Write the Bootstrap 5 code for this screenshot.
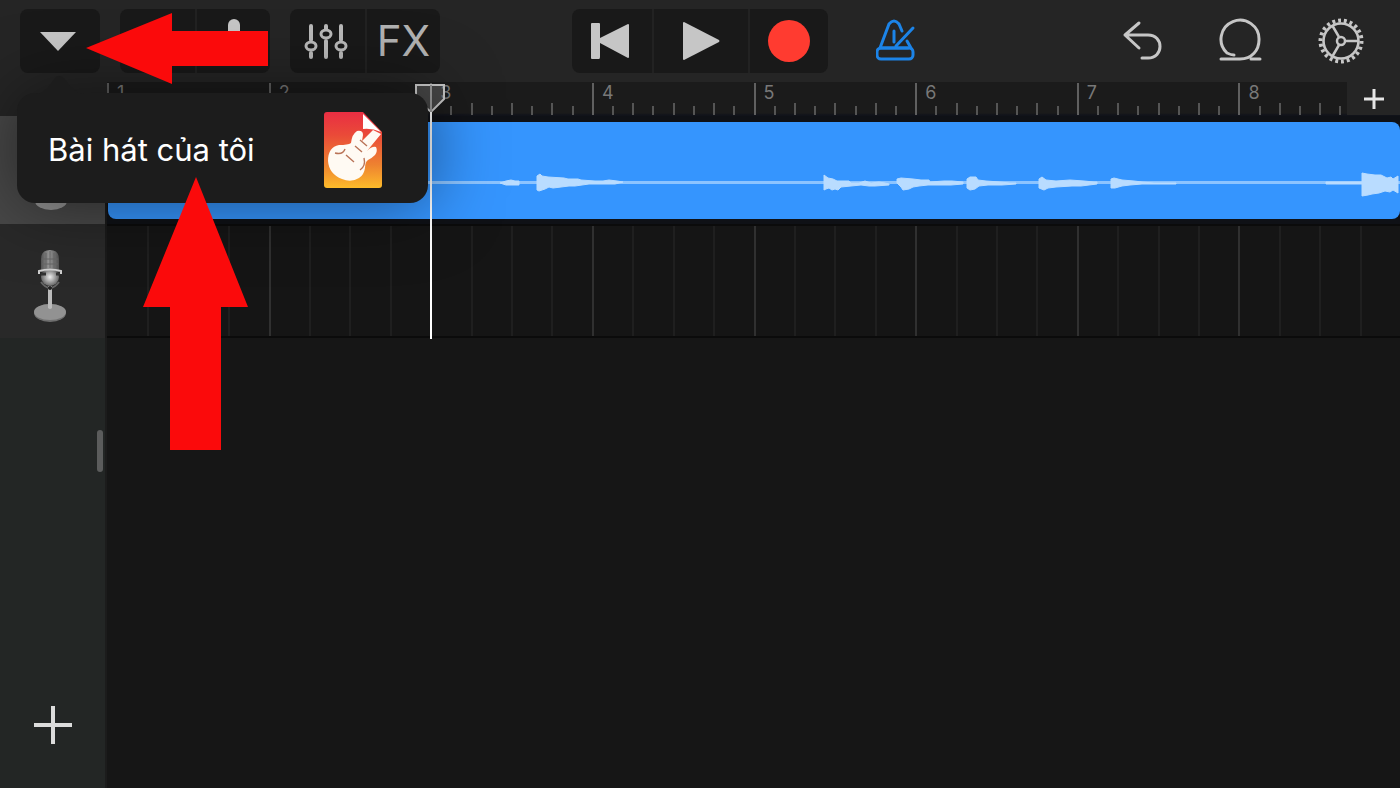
<!DOCTYPE html>
<html lang="vi">
<head>
<meta charset="utf-8">
<meta name="viewport" content="width=device-width, initial-scale=1">
<title>GarageBand</title>
<link href="https://cdn.jsdelivr.net/npm/bootstrap@5.3.0/dist/css/bootstrap.min.css" rel="stylesheet">
<style>
  :root { --side: 107px; --icon: #c6c6c6; }
  body { background: #161616; color: #fff; font-family: Inter, "Liberation Sans", sans-serif; overflow: hidden; }
  svg { display: block; }
  button { border: 0; background: none; padding: 0; color: var(--icon); }

  .toolbar { display: grid; grid-template-columns: 1fr auto 1fr; height: 82px; padding: 9px 20px 9px; background: #252525; }
  .tool-set { height: 64px; background: #191919; border-radius: 8px; }
  .tool-set button { display: flex; align-items: center; justify-content: center; height: 64px; }
  .tool-set button + button { border-left: 2px solid #222; }
  .w-sm { width: 75px; }
  .w-md { width: 80px; }
  .w-lg { width: 96px; }
  .fx { font-size: 42px; font-weight: 400; line-height: 64px; color: #b2b2b2; }
  .right-tools { gap: 56px; }

  .side { width: var(--side); flex: none; border-right: 2px solid #1a1a1a; }
  .ruler { height: 34px; background: #252525; }
  .ruler .side { border-color: #252525; }
  .measures { display: grid; grid-template-columns: repeat(8, 1fr); background: linear-gradient(#1b1b1b 31px, #11131a 33px); }
  .measure { display: grid; grid-template-columns: repeat(8, 1fr); align-items: end; position: relative; padding-bottom: 1px; }
  .measure i { border-left: 2px solid #555; height: 9px; }
  .measure i:nth-of-type(odd) { height: 12px; }
  .measure i:first-of-type { height: 32px; border-color: #606060; }
  .measure span { position: absolute; left: 10px; top: 0; font-size: 18px; line-height: 22px; color: #787878; }
  .add-section { position: absolute; right: 0; top: 0; width: 53px; height: 33px; background: #252525; display: flex; align-items: center; justify-content: center; }

  .track-one { height: 108px; background: #0f1116; }
  .track-one .side { background: #484848; }
  .track-two { height: 114px; background: #0b0b0b; }
  .track-two .side { background: #292929; }
  .clip { margin: 6px 0 5px 1px; background: #3595fe; border-radius: 8px; overflow: hidden; }
  .lane-grid { display: grid; grid-template-columns: repeat(32, 1fr); margin: 2px 0; background: #151515; }
  .lane-grid i { border-left: 2px solid #1f1f1f; }
  .lane-grid i:nth-child(4n+1) { border-color: #303030; }
  .lane-grid i:first-child { border: 0; }
  .rest .side { background: #232625; border-color: #1c1c1c; }
  .handle { width: 6px; height: 42px; margin: 92px 2px 0 0; background: #5b5c5c; border-radius: 3px; }
  .new-track { width: 40px; height: 40px; margin: 0 0 43px 33px; }

  .over { position: absolute; }
  .playhead { left: calc(var(--side) + (100% - var(--side)) / 4 - 16px); top: 82px; }
  .songs-menu { left: 17px; top: 93px; width: 411px; height: 110px; padding: 4px 46px 0 31px; background: #1c1c1c; border-radius: 18px; box-shadow: 0 0 70px rgba(0,0,0,.5); }
  .songs-menu a { font-size: 31px; line-height: 40px; }
  .songs-tip { left: 36px; top: 75px; }
  .arrow-left { left: 86px; top: 13px; }
  .arrow-up { left: 143px; top: 177px; }
</style>
</head>
<body class="position-relative vh-100 d-flex flex-column">

<header class="toolbar">
  <div class="d-flex gap-3">
    <div class="tool-set me-1">
      <button class="w-md" aria-label="Menu"><svg class="me-1" width="38" height="22" viewBox="0 0 38 22" fill="currentColor"><path d="M1 2h36L19 21z"/></svg></button>
    </div>
    <div class="tool-set d-flex me-1">
      <button class="w-sm" aria-label="Tracks"><svg width="28" height="16" viewBox="0 0 28 16" stroke="currentColor" stroke-width="3"><path d="M2 2h24M2 8h24M2 14h24"/></svg></button>
      <button class="w-sm" aria-label="Instrument"><svg width="30" height="44" viewBox="0 0 30 44" fill="none" stroke="currentColor" stroke-width="3"><rect x="9" y="0" width="12" height="26" rx="6" fill="currentColor" stroke="none"/><path d="M4 20c0 14 22 14 22 0M15 31v11M8 42h14"/></svg></button>
    </div>
    <div class="tool-set d-flex">
      <button class="w-sm" aria-label="Mixer"><svg class="me-1" width="44" height="38" viewBox="0 0 44 38" fill="none" stroke="#b9b9b9" stroke-width="4" stroke-linecap="round"><path d="M7 4v14M7 31v4M22 4v3M22 19v16M37 4v14M37 31v4"/><ellipse cx="7" cy="24" rx="5" ry="4" stroke-width="3"/><ellipse cx="22" cy="12" rx="5" ry="4" stroke-width="3"/><ellipse cx="37" cy="24" rx="5" ry="4" stroke-width="3"/></svg></button>
      <button class="w-sm fx">FX</button>
    </div>
  </div>
  <div class="tool-set d-flex">
    <button class="w-md" aria-label="Rewind"><svg class="me-1" width="40" height="38" viewBox="0 0 40 38" fill="currentColor"><path d="M1 2q0-1 1-1h7q1 0 1 1v14L38 2q1 0 1 1v32q0 1-1 1L10 21v14q0 2-1 2H2q-1 0-1-1z"/></svg></button>
    <button class="w-lg" aria-label="Play"><svg width="40" height="40" viewBox="0 0 40 40" fill="currentColor"><path d="M2 2q0-1 1-1L38 19q1 1 0 2L3 39q-1 0-1-1z"/></svg></button>
    <button class="w-md" aria-label="Record"><svg width="44" height="44" viewBox="0 0 44 44"><circle cx="22" cy="22" r="21" fill="#ff3b30"/></svg></button>
  </div>
  <div class="right-tools d-flex align-items-center">
    <button class="ms-5 me-auto" aria-label="Metronome"><svg width="42" height="44" viewBox="2 0 42 44" fill="none" stroke="#1c84e8" stroke-width="3" stroke-linecap="round" stroke-linejoin="round"><path d="M6 29 15 5q5-6 10 0l3 7M33 22l4 7M20 12v11M39 9 22 27M6 29h28"/><rect x="3" y="29" width="36" height="11" rx="4"/></svg></button>
    <button aria-label="Undo"><svg width="40" height="42" viewBox="0 0 40 42" fill="none" stroke="currentColor" stroke-width="3" stroke-linecap="round" stroke-linejoin="round"><path d="M17 3 3 15l14 13M3 15h23c16 0 16 23 0 23h-6"/></svg></button>
    <button aria-label="Loops"><svg width="44" height="46" viewBox="0 0 44 46" fill="none" stroke="currentColor" stroke-width="3" stroke-linecap="round"><path d="M3 41h19C34 41 41 32 41 22A19 19 0 1 0 9 35q4 2 7 2M33 41h9"/></svg></button>
    <button class="me-3" aria-label="Settings"><svg width="46" height="48" viewBox="0 0 46 48" fill="none" stroke="currentColor"><circle cx="23" cy="24" r="20.5" stroke-width="4" pathLength="88" stroke-dasharray="2 2"/><circle cx="23" cy="24" r="17.5" stroke-width="2.6"/><circle cx="23" cy="24" r="4" stroke-width="2.5"/><path d="M27 24h14M21 20l-7-12M21 28l-7 12" stroke-width="2.5"/></svg></button>
  </div>
</header>

<div class="ruler d-flex position-relative">
  <div class="side"></div>
  <div class="measures flex-grow-1">
    <div class="measure"><span>1</span><i></i><i></i><i></i><i></i><i></i><i></i><i></i><i></i></div>
    <div class="measure"><span>2</span><i></i><i></i><i></i><i></i><i></i><i></i><i></i><i></i></div>
    <div class="measure"><span>3</span><i></i><i></i><i></i><i></i><i></i><i></i><i></i><i></i></div>
    <div class="measure"><span>4</span><i></i><i></i><i></i><i></i><i></i><i></i><i></i><i></i></div>
    <div class="measure"><span>5</span><i></i><i></i><i></i><i></i><i></i><i></i><i></i><i></i></div>
    <div class="measure"><span>6</span><i></i><i></i><i></i><i></i><i></i><i></i><i></i><i></i></div>
    <div class="measure"><span>7</span><i></i><i></i><i></i><i></i><i></i><i></i><i></i><i></i></div>
    <div class="measure"><span>8</span><i></i><i></i><i></i><i></i><i></i><i></i><i></i><i></i></div>
  </div>
  <button class="add-section" aria-label="Add section"><svg width="20" height="20" viewBox="0 0 20 20" stroke="#e6e6e6" stroke-width="3"><path d="M10 0v20M0 10h20"/></svg></button>
</div>

<div class="track-one d-flex">
  <div class="side d-flex align-items-end justify-content-center pb-2"><svg class="me-1" width="34" height="16" viewBox="0 0 34 16"><ellipse cx="17" cy="1" rx="16" ry="9" fill="#929292"/></svg></div>
  <div class="clip flex-grow-1">
    <svg width="100%" height="97" viewBox="0 0 1292 97" preserveAspectRatio="none" fill="#b9dcff" stroke="#b9dcff">
      <path d="M0 59h1292v3H0z" fill="#8cc4ff" stroke="none"/>
      <path d="M392 61l6-2 5-1 4 1 4 0v4h-6l-7 0z"/>
      <path d="M429 60v-6l3-2 2 2 6 1 16 1 4 1 10 0 3 1 14 1 8 0 6-1 8 1 6 1-8 2-14 0-12 0-14 2-6 0-8 1-8 1-4-1-4 2-6 2-2-1z"/>
      <path d="M716 68v-15l4 3 5 1 4 2 12 0 2 2 8 0 6-2 6 2 8-1 6 1 4 1v1l-14 1-6 0-8-1-10 1-10 1-3 3-3-1-3 1-3-2-3 1z"/>
      <path d="M789 61v-4l4-1 12 1 8 1 8 0 1 2 14-1 8 0 11 1v2l-12 1-14 0-9 0-9 1-6 1-4 2-6 1-2-3z"/>
      <path d="M859 61v-4l3-2 6 0 2 3 8 1 14 1 10 1 6 0v1l-14 1-14 0-9 1-4 3-5 1-3-2z"/>
      <path d="M931 61v-4l3-2 4 3 10 1 14-1 14 1 10 1 3 0v2l-16 2-9 0-16 1-8 1-4 2-5-2z"/>
      <path d="M1003 66v-9l3-1 8 2 12 1 8 1 12 1 22 0v1h-34l-12 1-8 1-7 2z"/>
      <path d="M1218 60h36v-9l5 1 8 1 6 0 6 3 4-1 2 2 5-3v17l-5-3-3 2-5-1-6 2-7 1-4 1-6 1v-12h-36z"/>
    </svg>
  </div>
</div>

<div class="track-two d-flex">
  <div class="side d-flex align-items-center justify-content-center pt-2">
    <svg class="me-1" width="36" height="76" viewBox="0 0 36 76">
      <defs>
        <linearGradient id="metal"><stop stop-color="#555"/><stop offset=".45" stop-color="#989898"/><stop offset="1" stop-color="#505050"/></linearGradient>
        <radialGradient id="ball"><stop stop-color="#eee"/><stop offset="1" stop-color="#666"/></radialGradient>
      </defs>
      <ellipse cx="17" cy="66" rx="16" ry="9" fill="#6f6f6f"/><ellipse cx="17" cy="65" rx="16" ry="8" fill="#929292"/>
      <path d="M15 39h4v22q-2 2-4 0z" fill="#bbb"/>
      <path d="M8 12Q8 3 17 3t9 9v13H8z" fill="url(#metal)"/>
      <path d="M13 6v17M17 4v19M21 6v17M9 12h16M9 17h16" stroke="#666" fill="none"/>
      <circle cx="17" cy="30" r="9" fill="url(#ball)"/>
      <path d="M6 27v-3q11-3 22 0v3" fill="none" stroke="#d0d0d0" stroke-width="2"/>
      <path d="M8 27h5M23 27h4" stroke="#333" stroke-width="3"/>
      <path d="M8 35q9 12 18 0" fill="none" stroke="#666" stroke-width="2"/><circle cx="17" cy="41" r="2" fill="#222"/>
    </svg>
  </div>
  <div class="lane-grid flex-grow-1"><i></i><i></i><i></i><i></i><i></i><i></i><i></i><i></i><i></i><i></i><i></i><i></i><i></i><i></i><i></i><i></i><i></i><i></i><i></i><i></i><i></i><i></i><i></i><i></i><i></i><i></i><i></i><i></i><i></i><i></i><i></i><i></i></div>
</div>

<div class="rest d-flex flex-grow-1">
  <div class="side d-flex flex-column">
    <div class="handle align-self-end"></div>
    <button class="new-track mt-auto" aria-label="Add track"><svg width="40" height="40" viewBox="0 0 40 40" stroke="#dcdcdc" stroke-width="4"><path d="M20 1v38M1 20h38"/></svg></button>
  </div>
</div>

<svg class="over playhead" width="32" height="257" viewBox="0 0 32 257"><path d="M2 3h28v14L17 30 2 17z" fill="#8886" stroke="#c8c8c8" stroke-width="2"/><path d="M17 3v28" stroke="#999" stroke-width="2"/><path d="M17 30v227" stroke="#fff" stroke-width="2"/></svg>

<div class="over songs-menu d-flex align-items-center justify-content-between">
  <a href="#" class="text-white text-decoration-none">Bài hát của tôi</a>
  <svg width="58" height="76" viewBox="0 0 58 76">
    <defs><linearGradient id="sunset" x2="0" y2="1"><stop stop-color="#e92e43"/><stop offset=".3" stop-color="#ea4a38"/><stop offset=".7" stop-color="#ee8330"/><stop offset="1" stop-color="#fdbb2a"/></linearGradient></defs>
    <path d="M3 0h36l19 20v53q0 3-3 3H3q-3 0-3-3V3q0-3 3-3z" fill="url(#sunset)"/>
    <path d="M39 2v15q9-1 18 3z" fill="#fff"/>
    <path d="M49 18l8 4-14 17q5-5 9-4 2 4-1 8-3 3-7 5-3 2-3 8-1 7-6 10-8 5-17 1Q5 62 4 49 4 35 15 33q9 0 12-2 1-9 6-12 6-1 6 4l-1 6z" fill="#fffaf3"/>
    <path d="M11 41q8 2 10-4M22 43l8 7M31 34l7 6M36 28l7 6M36 58q6-4 4-12" fill="none" stroke="#b97357" stroke-width="1.4"/>
  </svg>
</div>
<svg class="over songs-tip" width="48" height="19" viewBox="0 0 48 19"><path d="M0 19q7-1 13-8l6-8q4-4 9 0l6 8q7 7 14 8z" fill="#1c1c1c"/></svg>

<svg class="over arrow-left" width="183" height="72" viewBox="0 0 183 72"><path d="M0 35 86 0v18h96v35H86v18z" fill="#fb0a0b"/></svg>
<svg class="over arrow-up" width="106" height="274" viewBox="0 0 106 274"><path d="M53 0l52 130H78v143H27V130H0z" fill="#fb0a0b"/></svg>

<script src="https://cdn.jsdelivr.net/npm/bootstrap@5.3.0/dist/js/bootstrap.bundle.min.js"></script>
</body>
</html>
